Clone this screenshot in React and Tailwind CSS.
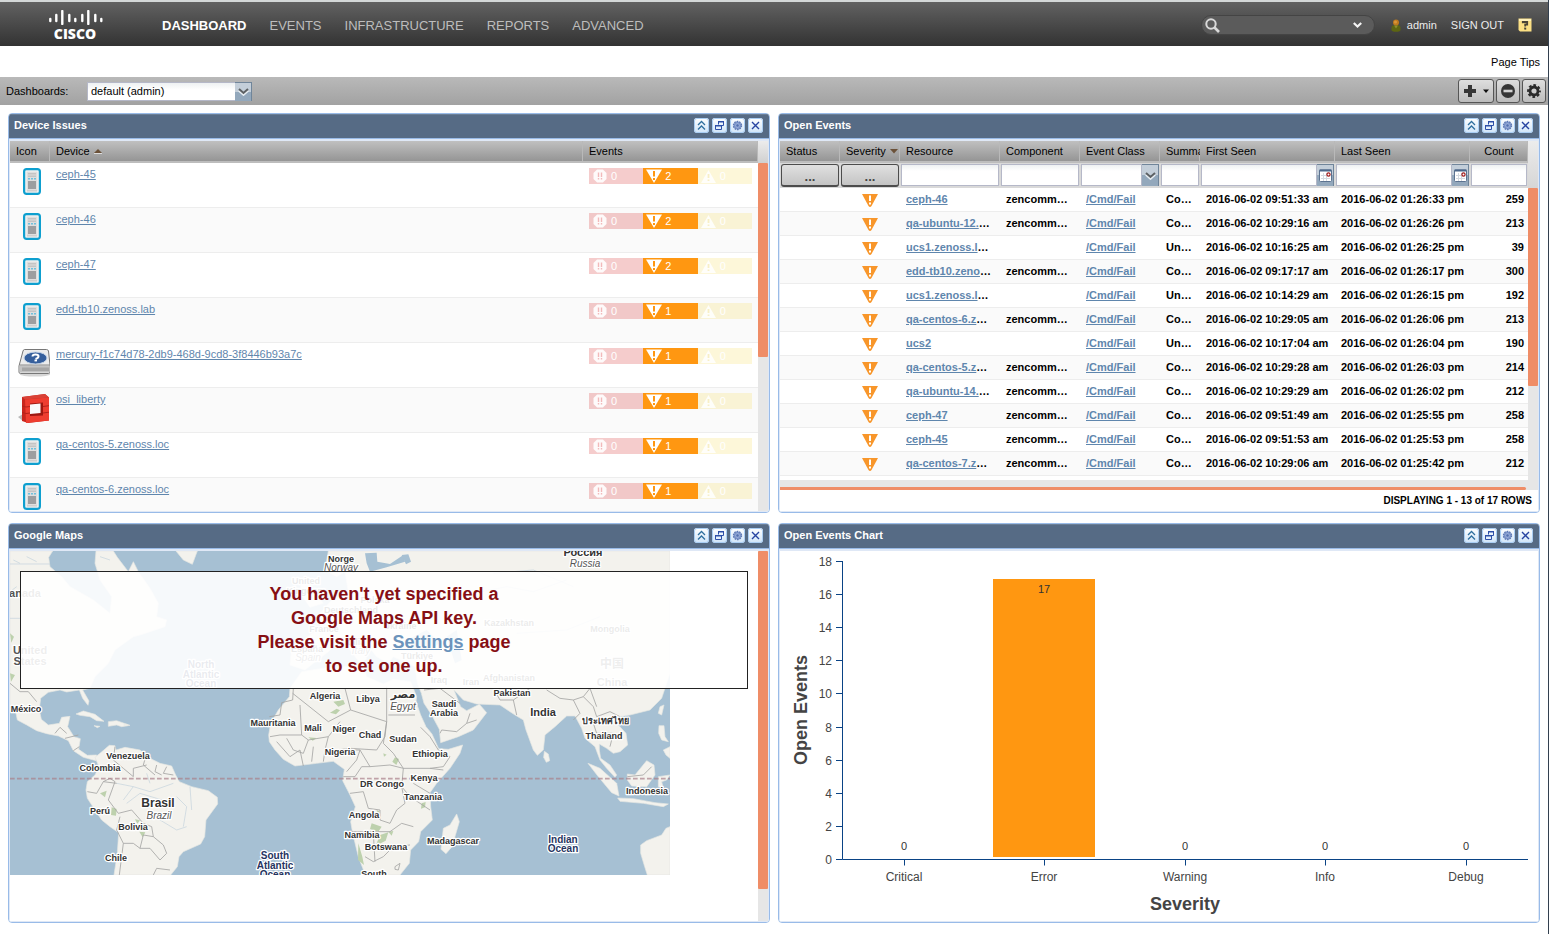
import React from "react";

const TOOL_ICONS = {
  collapse: (
    <g fill="none" stroke="#2f6f9f" strokeWidth="1.3">
      <path d="M4 7l3.500-3.500L11 7" />
      <path d="M4 11.500L7.500 8l3.500 3.500" />
    </g>
  ),
  restore: (
    <g fill="none" stroke="#2d4fa8" strokeWidth="1">
      <path d="M6.500 6.500v-3h5v4h-2" />
      <path d="M6 3.800h6" strokeWidth="1.600" />
      <path d="M3.500 7.500h6v4h-6z" fill="#e4f0fc" />
      <path d="M3 7.800h7" strokeWidth="1.600" />
    </g>
  ),
  gear: (
    <g>
      <circle cx="7.500" cy="7.500" r="4" fill="#93a9d6" stroke="#5d78b4" strokeWidth="1.400" strokeDasharray="1.600 .9" />
      <circle cx="7.500" cy="7.500" r="3" fill="none" stroke="#6d87c0" strokeWidth=".8" />
      <circle cx="7.500" cy="7.500" r="1.200" fill="#536fae" />
    </g>
  ),
  close: <path d="M4 4l7 7M11 4l-7 7" stroke="#2743a0" strokeWidth="1.400" fill="none" />,
};

function Tool({ name, label }) {
  return (
    <button
      type="button"
      aria-label={label}
      className="h-[15px] w-[15px] rounded-[3px] bg-linear-to-b from-white to-[#cfe4f8]"
    >
      <svg viewBox="0 0 15 15" className="block h-[15px] w-[15px]">
        <rect x=".5" y=".5" width="14" height="14" rx="2.500" fill="none" stroke="#a9cdf3" />
        {TOOL_ICONS[name]}
      </svg>
    </button>
  );
}

function Portlet({ title, children }) {
  return (
    <section className="flex h-[400px] min-w-0 flex-col overflow-hidden rounded-[4px] border border-[#99bbe8] bg-white">
      <header className="flex h-[25px] shrink-0 items-center justify-between border-b border-[#99bbe8] bg-[#566b85] pr-1.5 pb-0.5 pl-[5px] shadow-[inset_0_1px_0_#6b7f97]">
        <h2 className="text-[11px] font-bold text-white">{title}</h2>
        <div className="flex gap-[3px]">
          <Tool name="collapse" label={"Collapse " + title} />
          <Tool name="restore" label={"Maximize " + title} />
          <Tool name="gear" label={"Configure " + title} />
          <Tool name="close" label={"Close " + title} />
        </div>
      </header>
      <div className="flex min-h-0 flex-1 flex-col border-x border-t-2 border-b border-[#dfe8f6]">{children}</div>
    </section>
  );
}

function Chevron() {
  return (
    <span className="pointer-events-none flex h-full w-[17px] shrink-0 items-center justify-center border-t border-r border-[#70859a] bg-linear-to-b from-[#c3ced9] from-50% to-[#93a8bc] to-50%">
      <svg viewBox="0 0 11 8" className="h-2 w-[11px]">
        <path d="M1 1.500l4.500 4L10 1.500" stroke="#e8eef3" strokeWidth="2.500" fill="none" transform="translate(0 1)" />
        <path d="M1 1l4.500 4L10 1" stroke="#5d6164" strokeWidth="2" fill="none" />
      </svg>
    </span>
  );
}

function Calendar() {
  return (
    <span className="flex h-full w-[17px] shrink-0 items-center justify-center border-t border-r border-[#70859a] bg-linear-to-b from-[#c3ced9] from-50% to-[#93a8bc] to-50%">
      <svg viewBox="0 0 13 13" className="h-[13px] w-[13px]">
        <rect x=".5" y="1" width="12" height="11.500" rx="1" fill="#fff" stroke="#5c7390" />
        <path d="M.5 1.500h12" stroke="#4b678a" strokeWidth="2" />
        <path d="M2 6.500h9M2 9.500h9M4.500 4v8M7.500 4v8" stroke="#d3d9e0" strokeWidth="1" />
        <circle cx="9.500" cy="5.500" r="1.600" fill="#fff" stroke="#a01818" strokeWidth="1.200" />
      </svg>
    </span>
  );
}

/* ---------- top bar ---------- */

const LOGO_BARS = [
  [49, 18, 22], [55, 14, 22], [61, 10, 25], [68, 14, 22], [74, 18, 22],
  [81, 14, 22], [87, 10, 25], [94, 14, 22], [100, 18, 22],
];

function Logo() {
  return (
    <div className="flex w-[54px] flex-col items-center">
      <svg viewBox="48 10 55 15" className="h-[15px] w-[55px]">
        {LOGO_BARS.map(([x, a, b]) => (
          <path key={x} d={`M${x + 1.3} ${a + 1}V${b - 1}`} stroke="#fff" strokeWidth="2.400" strokeLinecap="round" />
        ))}
      </svg>
      <span className="font-['Open_Sans',sans-serif] text-[14px] leading-[18px] font-extrabold text-white">CISCO</span>
    </div>
  );
}

const NAV = ["DASHBOARD", "EVENTS", "INFRASTRUCTURE", "REPORTS", "ADVANCED"];

function TopBar() {
  return (
    <header className="flex h-[46px] items-center border-t-2 border-[#d4d8d8] bg-linear-to-b from-[#626262] to-[#333333] pt-1 pr-4 pl-12">
      <a href="#home" aria-label="Cisco home"><Logo /></a>
      <nav className="ml-[60px] flex gap-[23px] text-[13px]">
        {NAV.map((n, i) => (
          <a key={n} href={"#" + n.toLowerCase()} className={i === 0 ? "font-bold text-white" : "text-[#bdbdbd]"}>
            {n}
          </a>
        ))}
      </nav>
      <div className="ml-auto flex items-center pb-0.5 text-[11px] text-[#ececec]">
        <div className="flex h-5 w-[174px] items-center rounded-full border border-[#444444] bg-[#5b5b5b] pr-3 pl-[3px]">
          <svg viewBox="0 0 15 15" className="h-[15px] w-[15px] shrink-0">
            <circle cx="6" cy="6" r="4.700" fill="none" stroke="#d9d9d9" strokeWidth="2" />
            <path d="M9.500 9.500l4.500 4.500" stroke="#d9d9d9" strokeWidth="2.600" />
          </svg>
          <input aria-label="Search" className="min-w-0 flex-1 bg-transparent px-1 outline-none" />
          <svg viewBox="0 0 9 7" className="h-[7px] w-[9px] shrink-0">
            <path d="M.8 1l3.700 3.500L8.200 1" fill="none" stroke="#f4f4f4" strokeWidth="2.200" />
          </svg>
        </div>
        <a href="#admin" className="ml-4 flex items-center gap-1.5">
          <svg viewBox="0 0 10 13" className="h-[13px] w-2.5">
            <path d="M.5 8.500Q.5 6.300 3 6.300h4q2.500 0 2.500 2.200v2.500Q9.500 12.800 5 12.800T.5 11z" fill="#5d6512" />
            <path d="M3 6.500h4l-2 3z" fill="#8a8f2e" />
            <circle cx="5" cy="3.500" r="3" fill="#c07a1d" />
            <circle cx="4.500" cy="3" r="1.500" fill="#d9963a" />
          </svg>
          admin
        </a>
        <a href="#signout" className="ml-3.5">SIGN OUT</a>
        <a href="#help" aria-label="Help" className="ml-3.5">
          <svg viewBox="0 0 14 14" className="h-3.5 w-3.5">
            <path d="M.5.5h13v13H2L.5 12z" fill="#fbdf83" />
            <path d="M1 1h12v2H1z" fill="#fff0b8" />
            <path d="M4.800 5.200V4h4.400v2.500H7.200v2" fill="none" stroke="#4a4436" strokeWidth="1.800" />
            <path d="M6.200 9.600h2v2h-2z" fill="#4a4436" />
          </svg>
        </a>
      </div>
    </header>
  );
}

function ToolButton({ label, children, wide }) {
  return (
    <button
      type="button"
      aria-label={label}
      className={
        "flex h-6 items-center justify-center gap-1.5 rounded-[3px] border border-[#555555] bg-linear-to-b from-[#dedede] to-[#bcbcbc] " +
        (wide ? "w-9" : "w-6")
      }
    >
      {children}
    </button>
  );
}

function DashboardBar() {
  return (
    <div className="flex h-7 items-center bg-linear-to-b from-[#b9b9b9] to-[#a2a2a2] pr-0.5 pl-1.5">
      <label htmlFor="dashboard" className="w-[81px]">Dashboards:</label>
      <div className="grid h-[19px] w-[165px] grid-cols-[1fr_17px]">
        <select
          id="dashboard"
          className="col-span-2 col-start-1 row-start-1 h-[19px] w-full appearance-none border border-[#b5b8c8] bg-linear-to-b from-[#eef1f2] to-white to-40% px-[3px] text-[11px] text-black"
        >
          <option>default (admin)</option>
        </select>
        <div className="pointer-events-none col-start-2 row-start-1 h-[19px]"><Chevron /></div>
      </div>
      <div className="ml-auto flex gap-0.5">
        <ToolButton label="Add portlet" wide>
          <svg viewBox="0 0 26 14" className="h-3.5 w-[26px]">
            <path d="M7 1v12M1 7h12" stroke="#363636" strokeWidth="4" />
            <path d="M20 5.500h6l-3 3.500z" fill="#111" />
          </svg>
        </ToolButton>
        <ToolButton label="Remove dashboard">
          <svg viewBox="0 0 14 14" className="h-3.5 w-3.5">
            <circle cx="7" cy="7" r="7" fill="#363636" />
            <path d="M2.500 7h9" stroke="#d2d2d2" strokeWidth="2.600" />
          </svg>
        </ToolButton>
        <ToolButton label="Dashboard settings">
          <svg viewBox="0 0 14 14" className="h-3.5 w-3.5">
            <circle cx="7" cy="7" r="4" fill="none" stroke="#2b2b2b" strokeWidth="2.800" />
            <circle cx="7" cy="7" r="5.900" fill="none" stroke="#2b2b2b" strokeWidth="2" strokeDasharray="2.700 1.934" strokeDashoffset="1.350" />
          </svg>
        </ToolButton>
      </div>
    </div>
  );
}

/* ---------- device issues ---------- */

const TH =
  "h-[22px] overflow-hidden border-b-2 border-[#bdbdbd] bg-linear-to-b from-[#c0c0c0] to-[#959595] px-1.5 text-left font-normal whitespace-nowrap shadow-[inset_-1px_0_0_#b9b9b9]";
const LINK = "text-[#5f86ad] underline";

function ServerIcon() {
  return (
    <svg viewBox="0 0 18 27" className="ml-[7px] h-[27px] w-[18px]">
      <rect x="1.200" y="1.200" width="15.600" height="24.600" rx="2.500" fill="#dedede" stroke="#0e9fcf" strokeWidth="2.400" />
      <rect x="3" y="3" width="12" height="21" fill="none" stroke="#f7f7f7" />
      <path d="M5 5h8v4H5z" fill="#c4c4c4" />
      <path d="M5 7h8" stroke="#e4e4e4" strokeWidth=".8" />
      <path d="M5 10.700h8" stroke="#6fc0dc" strokeWidth="1.500" strokeDasharray="2 1" />
      <path d="M5 13h8v8H5z" fill="#9c9ea0" />
      <path d="M4 22h10v1.500H4z" fill="#cfcfcf" />
    </svg>
  );
}

function DriveIcon() {
  return (
    <svg viewBox="0 0 32 29" className="ml-0.5 h-[29px] w-8">
      <ellipse cx="17" cy="26.500" rx="15" ry="2" fill="#d5d5d5" />
      <path d="M6.500 1.500h22q1.500 0 2 1.500l1.500 14v7q0 1.500-1.500 1.500H2.500Q1 25.500 1 24v-6L5 3q.5-1.500 1.500-1.500z" fill="#ececec" stroke="#777" />
      <path d="M1.500 17.500h30v7h-30z" fill="#c2c2c2" />
      <path d="M2 17h30" stroke="#8b8b8b" />
      <path d="M4 19.500h27v3.500H4z" fill="#a6a6a6" />
      <ellipse cx="17.500" cy="10" rx="11.500" ry="6" fill="#365f9c" stroke="#c3d2e6" />
      <path d="M14.500 8.500q0-2 3-2t3 1.800-3 2.700" fill="none" stroke="#fff" strokeWidth="2" />
      <path d="M16.500 12.500h2.500" stroke="#fff" strokeWidth="1.800" />
    </svg>
  );
}

function CubeIcon() {
  return (
    <svg viewBox="0 0 32 31" className="ml-0.5 h-[31px] w-8">
      <path d="M0 24l5-3v7z" fill="#b9b9b9" />
      <path d="M4 4L27 1l4 3.500v23L10 30l-6-2z" fill="#c9261d" />
      <path d="M4 4L27 1l4 3.500L7 6.500z" fill="#d94136" />
      <path d="M7 6.500l24-2v23L8 30z" fill="#ee3d30" />
      <path d="M12 10.500l13-1v13L12 23z" fill="#9d1710" />
      <path d="M12 11.500l10.500-1V20L12 21z" fill="#fafafa" />
      <path d="M4 13l4 1 4-.5M25 13.500l6-.8M4 19.500l4 1 4-.5M25 20l6-.8" stroke="#b3221a" fill="none" />
    </svg>
  );
}

const DEVICES = [
  ["ceph-45", "server", 2],
  ["ceph-46", "server", 2],
  ["ceph-47", "server", 2],
  ["edd-tb10.zenoss.lab", "server", 1],
  ["mercury-f1c74d78-2db9-468d-9cd8-3f8446b93a7c", "drive", 1],
  ["osi_liberty", "cube", 1],
  ["qa-centos-5.zenoss.loc", "server", 1],
  ["qa-centos-6.zenoss.loc", "server", 1],
];

const DEVICE_ICONS = { server: <ServerIcon />, drive: <DriveIcon />, cube: <CubeIcon /> };

function EventBar({ count }) {
  return (
    <div className="grid h-4 w-[163px] grid-cols-3 text-[11px] leading-4 text-white">
      <span className="flex items-center gap-1 bg-[#cc0000]/20 pl-1">
        <svg viewBox="0 0 14 14" className="h-3.5 w-3.5">
          <path d="M4.100.5h5.800L13.500 4.100v5.800L9.900 13.500H4.100L.5 9.900V4.100z" fill="#fff" fillOpacity=".9" />
          <path d="M5.500 3.500v4.500M8.500 3.500v4.500M5.500 9v1.500M8.500 9v1.500" stroke="#f2b9ba" strokeWidth="1.400" />
        </svg>
        0
      </span>
      <span className="flex items-center gap-[3px] bg-[#ff9711] pl-[3px]">
        <svg viewBox="0 0 16 14" className="h-3.5 w-4">
          <path d="M0 .5h16L8 14z" fill="#fff" />
          <path d="M8 2v5.500M8 9v2" stroke="#ff9711" strokeWidth="2" />
        </svg>
        {count}
      </span>
      <span className="flex items-center gap-1 bg-[#f7d540]/20 pl-[3px]">
        <svg viewBox="0 0 15 13" className="h-[13px] w-[15px]">
          <path d="M7.500 0L15 13H0z" fill="#fff" fillOpacity=".85" />
          <path d="M7.500 4v4M7.500 9.500v1.500" stroke="#f8efc6" strokeWidth="1.800" />
        </svg>
        0
      </span>
    </div>
  );
}

function DeviceIssues() {
  return (
    <div className="flex min-h-0 flex-1">
      <div className="min-w-0 flex-1 overflow-hidden">
        <table className="w-full table-fixed border-separate border-spacing-0">
          <thead>
            <tr>
              <th className={TH + " w-10"}>Icon</th>
              <th className={TH}>
                Device
                <svg viewBox="0 0 8 5" className="mb-0.5 ml-1 inline h-[5px] w-2">
                  <path d="M0 4l4-4 4 4z" fill="#6b5138" />
                  <path d="M0 4.500h8" stroke="#ddd" />
                </svg>
              </th>
              <th className={TH + " w-[175px]"}>Events</th>
            </tr>
          </thead>
          <tbody>
            {DEVICES.map(([name, icon, count]) => (
              <tr key={name} className="even:bg-[#fafafa]">
                <td className="h-[45px] border-b border-[#ededed] py-[5px] pl-1.5 align-top">{DEVICE_ICONS[icon]}</td>
                <td className="border-b border-[#ededed] px-1.5 py-[5px] align-top leading-[13px]">
                  <a href={"#" + name} className={LINK}>{name}</a>
                </td>
                <td className="border-b border-[#ededed] px-1.5 py-[5px] align-top">
                  <EventBar count={count} />
                </td>
              </tr>
            ))}
          </tbody>
        </table>
      </div>
      <div className="flex w-2.5 flex-col bg-[#e6e6e6]">
        <div className="h-[22px] bg-linear-to-b from-[#ececec] to-[#d0d0d0]" />
        <div className="h-[194px] rounded-[1px] bg-[#ef8d67]" />
      </div>
    </div>
  );
}

/* ---------- open events ---------- */

const EVENTS = [
  ["ceph-46", 0, "zencomm…", "Co…", "09:51:33", "01:26:33", 259],
  ["qa-ubuntu-12.", 1, "zencomm…", "Co…", "10:29:16", "01:26:26", 213],
  ["ucs1.zenoss.l", 1, "", "Un…", "10:16:25", "01:26:25", 39],
  ["edd-tb10.zeno", 1, "zencomm…", "Co…", "09:17:17", "01:26:17", 300],
  ["ucs1.zenoss.l", 1, "", "Un…", "10:14:29", "01:26:15", 192],
  ["qa-centos-6.z", 1, "zencomm…", "Co…", "10:29:05", "01:26:06", 213],
  ["ucs2", 0, "", "Un…", "10:17:04", "01:26:04", 190],
  ["qa-centos-5.z", 1, "zencomm…", "Co…", "10:29:28", "01:26:03", 214],
  ["qa-ubuntu-14.", 1, "zencomm…", "Co…", "10:29:29", "01:26:02", 212],
  ["ceph-47", 0, "zencomm…", "Co…", "09:51:49", "01:25:55", 258],
  ["ceph-45", 0, "zencomm…", "Co…", "09:51:53", "01:25:53", 258],
  ["qa-centos-7.z", 1, "zencomm…", "Co…", "10:29:06", "01:25:42", 212],
];

const FILTER_CELL = "h-[25px] bg-[#d9d9d9] p-px align-top";
const FILTER_BUTTON =
  "block h-[23px] w-full rounded-[3px] border border-b-2 border-[#4c4c4c] bg-linear-to-b from-[#e0e0e0] to-[#c4c4c4] pt-1 text-[13px] leading-4 font-bold text-[#444444]";
const FILTER_INPUT = "block h-[22px] w-full min-w-0 border border-[#b5b8c8] bg-linear-to-b from-[#eef1f2] to-white to-30% px-1";
const CELL_BASE = "border-b border-[#ededed] px-1.5 whitespace-nowrap overflow-hidden";
const CELL = CELL_BASE + " pb-0.5";

function OpenEvents() {
  return (
    <div className="flex min-h-0 flex-1 flex-col">
      <div className="flex min-h-0 flex-1">
        <div className="min-w-0 flex-1 overflow-hidden">
          <table className="w-full table-fixed border-separate border-spacing-0">
            <thead>
              <tr>
                <th className={TH + " w-[60px]"}>Status</th>
                <th className={TH + " w-[60px]"}>
                  Severity
                  <svg viewBox="0 0 8 5" className="mb-0.5 ml-1 inline h-[5px] w-2">
                    <path d="M0 0h8L4 4.500z" fill="#6b5138" />
                  </svg>
                </th>
                <th className={TH}>Resource</th>
                <th className={TH + " w-20"}>Component</th>
                <th className={TH + " w-20"}>Event Class</th>
                <th className={TH + " w-10"}>Summary</th>
                <th className={TH + " w-[135px]"}>First Seen</th>
                <th className={TH + " w-[135px]"}>Last Seen</th>
                <th className={TH + " w-[58px]"}>
                  <span className="block text-center">Count</span>
                </th>
              </tr>
              <tr>
                <td className={FILTER_CELL}><button type="button" aria-label="Filter status" className={FILTER_BUTTON}>...</button></td>
                <td className={FILTER_CELL}><button type="button" aria-label="Filter severity" className={FILTER_BUTTON}>...</button></td>
                <td className={FILTER_CELL}><input aria-label="Filter resource" className={FILTER_INPUT} /></td>
                <td className={FILTER_CELL}><input aria-label="Filter component" className={FILTER_INPUT} /></td>
                <td className={FILTER_CELL}>
                  <div className="flex h-[22px]">
                    <input aria-label="Filter event class" className={FILTER_INPUT} />
                    <Chevron />
                  </div>
                </td>
                <td className={FILTER_CELL}><input aria-label="Filter summary" className={FILTER_INPUT} /></td>
                <td className={FILTER_CELL}>
                  <div className="flex h-[22px]">
                    <input aria-label="Filter first seen" className={FILTER_INPUT} />
                    <Calendar />
                  </div>
                </td>
                <td className={FILTER_CELL}>
                  <div className="flex h-[22px]">
                    <input aria-label="Filter last seen" className={FILTER_INPUT} />
                    <Calendar />
                  </div>
                </td>
                <td className={FILTER_CELL}><input aria-label="Filter count" className={FILTER_INPUT} /></td>
              </tr>
            </thead>
            <tbody className="font-bold">
              {EVENTS.map(([res, cut, comp, summary, first, last, count], i) => (
                <tr key={i} className="even:bg-[#fafafa]">
                  <td className={CELL + " h-6"} />
                  <td className={CELL_BASE + " pt-0.5"}>
                    <svg viewBox="0 0 16 13" className="mx-auto h-[13px] w-4">
                      <path d="M0 0h16L9.500 12q-1.500 2-3 0z" fill="#f8962a" />
                      <path d="M8 1.500v5.500M8 8.500v2" stroke="#fff" strokeWidth="2" />
                    </svg>
                  </td>
                  <td className={CELL}><a href={"#" + res} className={LINK}>{res}</a>{cut ? "…" : ""}</td>
                  <td className={CELL}>{comp}</td>
                  <td className={CELL}><a href="#cmd-fail" className={LINK}>/Cmd/Fail</a></td>
                  <td className={CELL}>{summary}</td>
                  <td className={CELL}>2016-06-02 {first} am</td>
                  <td className={CELL}>2016-06-02 {last} pm</td>
                  <td className="border-b border-[#ededed] pr-1 pb-0.5 text-right">{count}</td>
                </tr>
              ))}
            </tbody>
          </table>
        </div>
        <div className="flex w-2.5 flex-col bg-[#e6e6e6]">
          <div className="h-[47px] bg-linear-to-b from-[#ececec] to-[#d6d6d6]" />
          <div className="h-[198px] rounded-[1px] bg-[#ef8d67]" />
        </div>
      </div>
      <div className="flex h-2.5 shrink-0 items-end bg-[#e6e6e6] pr-3">
        <div className="h-[3px] flex-1 rounded-r-[2px] bg-[#ef8d67]" />
      </div>
      <div className="flex h-[21px] shrink-0 items-center justify-end pr-1.5 text-[10px] font-bold">DISPLAYING 1 - 13 of 17 ROWS</div>
    </div>
  );
}

/* ---------- map ---------- */

const LAND = [
  "M30 93H158L146 112 150 140 185 170 210 200 280 240 330 280 335 230 300 180 285 130 288 93H340L352 112 385 155 400 125 415 155 450 205 475 250 470 290 500 300 495 320 420 345 400 350 345 390 325 430 285 470 270 505 248 510 267 543 264 556 248 535 238 510 200 516 180 510 145 517 122 535 118 570 124 598 145 615 178 610 185 592 210 589 203 620 222 650 241 656 236 688 262 706 290 705 288 722 250 712 220 692 205 662 175 648 140 641 110 632 80 615 52 600 48 580 30 556Z",
  "M285 712L300 700 328 676 345 677 348 690 375 682 420 690 450 715 480 730 515 738 527 765 538 785 575 800 625 812 652 832 653 852 618 900 614 950 602 972 550 995 537 1010 532 1040 512 1065H342L352 1000 356 938 330 920 305 900 285 870 262 835 258 810 262 785 285 765 297 740Z",
  "M228 582L250 573 285 583 312 604 290 602 270 590 240 586Z",
  "M325 605L350 602 390 616 365 620 350 615 325 619Z",
  "M282 617l18 2-8 4zM372 613l10 0v4h-10z",
  "M528 93H592L577 133 550 120Z",
  "M870 505L905 455 1000 440 1090 438 1100 470 1150 492 1180 478 1232 485 1240 505 1250 530 1248 545 1262 585 1278 620 1296 642 1316 686 1345 688 1388 675 1380 700 1350 745 1310 790 1290 818 1292 860 1297 900 1262 935 1256 965 1232 990 1228 1030 1200 1065H1096L1075 1010 1058 940 1052 905 1066 860 1050 825 1028 782 1033 748 1000 724 950 730 885 738 850 718 825 690 808 665 806 645 812 610 835 570 868 530Z",
  "M1370 882L1378 905 1356 980 1338 1001 1323 988 1326 960 1330 925 1350 915Z",
  "M985 93L975 150 1010 170 1035 155 1045 215 1000 235 960 280 960 320 905 365 875 380 870 435 915 450 940 430 985 395 1015 365 1050 390 1085 435 1100 415 1055 355 1085 355 1130 410 1165 430 1180 410 1245 440 1252 490 1264 520 1272 550 1295 585 1318 628 1322 668 1375 650 1420 630 1460 578 1438 553 1400 572 1382 560 1362 510 1390 540 1430 552 1500 555 1530 575 1545 585 1570 600 1578 630 1600 690 1612 706 1630 690 1635 645 1665 620 1700 588 1725 588 1745 625 1755 655 1785 680 1800 720 1820 745 1845 772 1850 765 1830 735 1802 715 1798 690 1798 672 1820 685 1840 700 1860 695 1883 675 1878 640 1855 615 1860 590 1890 585 1950 570 1985 535 2000 490 2010 460V93Z",
  "M1633 694l12 8 4 20-10 5-8-15z",
  "M1764 730L1800 745 1850 790 1857 828 1835 818 1795 770Z",
  "M1853 834L1900 836 1965 848 2005 852 1990 860 1930 850 1860 844Z",
  "M1882 762L1905 765 1940 722 1962 735 1965 765 1940 800 1895 798 1882 780Z",
  "M1975 770L2010 765 2000 780 1985 785 1990 805 1975 800Z",
  "M1977 617L1992 617 1995 650 2005 665 1985 660 1976 640Z",
  "M1990 690L2010 680V715L1998 705Z",
  "M1980 560L1992 555 1985 585 1975 580Z",
  "M2010 920L1998 925 1985 945 1940 962 1922 975 1922 1000 1934 1040 1942 1065H2010Z",
  "M900 220L905 180 930 175 930 200 970 250 930 262 915 240Z",
];

const SEAS = [
  "M1095 100L1130 98 1132 125 1170 132 1210 105 1215 125 1160 142 1110 155 1100 130Z",
  "M1205 105l20-2 8 22-15 8z",
  "M1220 360L1280 330 1320 370 1280 390 1230 385Z",
  "M1340 350L1370 330 1385 420 1365 430Z",
];

const BORDERS =
  "M30 490L60 515 85 515 110 545M165 640L180 622 200 640M195 655L235 645M220 692L238 680M345 680L340 720 370 745 400 770 400 745 440 735M440 700L430 735 465 765M470 735L465 755 485 765M500 740L490 760 520 765M262 815L290 820 310 785 350 790M310 785L330 775 345 785 325 840 355 880 395 870 430 910 455 920 460 950 430 945 420 985 400 970 370 970 350 930 360 890M420 985L450 985 480 1020 500 1000 490 975 460 950M370 970L358 1065M460 1065L470 1045 510 1050M880 505L878 540 845 548 840 585 808 590M878 520L985 605 1052 570 1035 505M900 555L905 645 840 645 810 650M905 645L925 660 985 650 1020 605M1052 570L1160 605M1160 500V605L1155 650 1130 690 1050 685 1010 690M985 650L975 690 970 725M860 655L880 690 910 700 925 660M830 665L870 710 900 690 910 738M940 680L935 725M1040 690L1080 690 1070 720 1040 755M1080 690L1110 740 1170 735 1210 745 1290 745 1330 750M1160 605L1150 670 1180 700 1210 745 1205 800 1230 830 1290 870M1262 622L1290 650 1315 690 1350 710 1330 740 1290 745M1030 770L1065 770 1085 740 1110 740M1050 820L1090 815 1105 865 1140 870 1140 900 1170 910 1190 870 1215 850 1205 800M1290 820L1240 790M1055 935L1170 935 1205 910 1240 920M1095 1010L1120 1025 1150 1010 1180 980 1230 975M1120 940L1125 1025M1185 1040L1200 1030 1195 1050 1185 1048ZM1272 510L1320 505 1380 550M1320 640L1325 630 1370 635 1400 610 1430 600M1400 610L1410 580M1480 505L1500 540 1540 540 1550 585M1540 540L1590 505M1640 510L1680 535 1720 540 1750 530 1780 560 1790 590M1720 540L1740 580 1720 600M1750 530L1770 505 1790 560M1790 590L1830 575 1860 590M1780 610L1790 640 1840 640 1830 680M1882 770L1930 765 1955 740M1165 585H1245";

const RIVERS =
  "M350 790L400 800 450 815 520 790M380 850L420 820 470 835 520 850M450 790L440 760M530 830L560 860 550 920M570 800L575 870M480 900L530 930 560 920M400 800L370 840M40 120L60 130M80 110L110 125M300 110L330 120M50 200L30 215M1420 220L1520 200 1600 215 1700 180M1550 340L1700 330 1800 290M1480 160L1600 150 1720 200M60 295H30M30 132H150";

const GREENS =
  "M1000 545l30-5 5 12-20 8zM990 578l20-12 10 5-12 12zM30 340l12 10-8 18zM30 460l15 5-12 20zM335 862l15 5-2 20-15-2zM300 820l20-8-5 20zM418 935l18 2-8 15zM405 898l15 3-8 10zM1115 910l30 10-10 15-25-8zM1140 945l25-8-8 25-30 15zM1075 970l12 40 5 25-18-15zM1185 712l12 5-8 18-12-10zM1265 850l12-4-2 16-12 4zM1165 935l15-2-5 14zM1130 870l8 4-6 12zM1150 700l10 4-8 6zM925 652l25 2-12 8z";

const LABELS = [
  ["anada", 15, 46, 11, "#555"], ["United", 20, 103, 11, "#555"], ["States", 20, 114, 11, "#555"],
  ["México", 16, 161, 9], ["Venezuela", 118, 208, 9], ["Colombia", 90, 220, 9], ["Brasil", 148, 256, 12],
  ["Perú", 90, 263, 9], ["Bolivia", 123, 279, 9], ["Chile", 106, 310, 9],
  ["Norge", 331, 11, 9], ["United", 296, 33, 9], ["Kingdom", 296, 43, 9], ["Deutschland", 341, 62, 9],
  ["France", 314, 81, 9], ["España", 297, 101, 9], ["Polska", 365, 52, 9], ["Ukraine", 390, 78, 9], ["Italia", 345, 94, 9],
  ["Türkiye", 407, 108, 9], ["Iraq", 429, 132, 9], ["Iran", 461, 134, 9], ["Afghanistan", 499, 130, 9],
  ["Kazakhstan", 499, 75, 9], ["Mongolia", 600, 81, 9], ["中国", 602, 117, 12, "#555"], ["China", 602, 135, 11, "#555"],
  ["Россия", 573, 5, 11],
  ["Algeria", 315, 148, 9], ["Libya", 358, 151, 9], ["مصر", 393, 147, 11],
  ["Saudi", 434, 156, 9], ["Arabia", 434, 165, 9], ["Pakistan", 502, 145, 9], ["India", 533, 165, 11],
  ["Mauritania", 263, 175, 9], ["Mali", 303, 180, 9], ["Niger", 334, 181, 9], ["Chad", 360, 187, 9],
  ["Sudan", 393, 191, 9], ["Nigeria", 330, 204, 9], ["Ethiopia", 420, 206, 9], ["Kenya", 414, 230, 9],
  ["DR Congo", 372, 236, 9], ["Tanzania", 413, 249, 9], ["Angola", 354, 267, 9], ["Namibia", 352, 287, 9],
  ["Botswana", 376, 299, 9], ["Madagascar", 443, 293, 9], ["South", 364, 326, 9],
  ["ประเทศไทย", 595, 173, 9], ["Thailand", 594, 188, 9], ["Indonesia", 637, 243, 9],
];

const ITALIC_LABELS = [
  ["Norway", 331, 20], ["Brazil", 149, 268], ["Spain", 298, 110], ["Italy", 351, 103], ["Egypt", 393, 159], ["Russia", 575, 16],
];

const OCEANS = [
  ["North", 191, 117], ["Atlantic", 191, 127], ["Ocean", 191, 136],
  ["South", 265, 308], ["Atlantic", 265, 318], ["Ocean", 265, 327],
  ["Indian", 553, 292], ["Ocean", 553, 301],
];

function WorldMap() {
  return (
    <svg viewBox="0 0 660 324" className="block h-[324px] w-[660px]" role="img" aria-label="World map">
      <rect width="660" height="324" fill="#a6c0d3" />
      <g transform="translate(-10 -31) scale(.333333)">
        {LAND.map((d) => (
          <path key={d} d={d} fill="#f3f2ed" stroke="#e6e7e3" strokeWidth="2" strokeLinejoin="round" />
        ))}
        {SEAS.map((d) => (
          <path key={d} d={d} fill="#a6c0d3" />
        ))}
        <path d={GREENS} fill="#bdd1ad" />
        <path d={RIVERS} fill="none" stroke="#c3d2dc" strokeWidth="2" />
        <path d={BORDERS} fill="none" stroke="#a5a5a3" strokeWidth="2.500" strokeLinejoin="round" />
        <path d="M30 776H2010" stroke="#a9808a" strokeOpacity=".7" strokeWidth="5" strokeDasharray="14 7" />
      </g>
      <g textAnchor="middle" stroke="#fff" strokeWidth="2.500" strokeLinejoin="round" paintOrder="stroke" className="font-['Liberation_Sans','DejaVu_Sans','Noto_Sans','Noto_Sans_CJK_SC',sans-serif]">
        {LABELS.map(([t, x, y, size, color]) => (
          <text key={t + x + y} x={x} y={y} fontSize={size} fontWeight="bold" fill={color || "#333"}>{t}</text>
        ))}
        {ITALIC_LABELS.map(([t, x, y]) => (
          <text key={t} x={x} y={y} fontSize="10" fontStyle="italic" fill="#555">{t}</text>
        ))}
        {OCEANS.map(([t, x, y]) => (
          <text key={t + x + y} x={x} y={y} fontSize="10" fontWeight="bold" fill="#26345f">{t}</text>
        ))}
      </g>
    </svg>
  );
}

function GoogleMaps() {
  return (
    <div className="flex min-h-0 flex-1">
      <div className="relative min-w-0 flex-1 overflow-hidden">
        <WorldMap />
        <div className="absolute top-5 right-2.5 left-2.5 border border-[#222222] bg-white/90 py-2.5 text-center text-[18px] leading-6 font-bold text-[#860f14]">
          <p>
            You haven't yet specified a<br />
            Google Maps API key.<br />
            Please visit the <a href="#settings" className="text-[#6c93bb] underline">Settings</a> page<br />
            to set one up.
          </p>
        </div>
      </div>
      <div className="w-2.5 bg-[#e6e6e6]">
        <div className="h-[338px] rounded-[1px] bg-[#ef8d67]" />
      </div>
    </div>
  );
}

/* ---------- chart ---------- */

const SEVERITIES = [["Critical", 0], ["Error", 17], ["Warning", 0], ["Info", 0], ["Debug", 0]];
const Y_TICKS = [0, 2, 4, 6, 8, 10, 12, 14, 16, 18];

function EventsChart() {
  const base = 308.5;
  const yOf = (v) => Math.round(base - (v * 298) / 18 - 0.5) + 0.5;
  return (
    <svg viewBox="0 0 758 370" className="block min-h-0 w-full flex-1 font-['Liberation_Sans',Arial,sans-serif]" role="img" aria-label="Open events by severity">
      <path d="M62.500 10V308.500H748" fill="none" stroke="#0a4385" />
      {Y_TICKS.map((v) => (
        <g key={v}>
          <path d={`M56 ${yOf(v)}H62.500`} stroke="#0a4385" />
          <text x="52" y={yOf(v) + 4} textAnchor="end" fontSize="12" fill="#444">{v}</text>
        </g>
      ))}
      {SEVERITIES.map(([name, v], i) => {
        const x = 124 + Math.floor(i * 140.6);
        return (
          <g key={name} textAnchor="middle" fill="#444">
            <path d={`M${x + 0.5} 308.500v6`} stroke="#0a4385" />
            {v > 0 && <rect x={x - 51} y="28" width="102" height="278" fill="#ff9711" />}
            <text x={x} y={v > 0 ? 42 : 299} fontSize="11" fill="#333">{v}</text>
            <text x={x} y="330" fontSize="12">{name}</text>
          </g>
        );
      })}
      <text x="405" y="359" textAnchor="middle" fontSize="18" fontWeight="bold" fill="#444">Severity</text>
      <text x="0" y="0" transform="translate(27 159) rotate(-90)" textAnchor="middle" fontSize="18" fontWeight="bold" fill="#444">Open Events</text>
    </svg>
  );
}

export default function App() {
  return (
    <div className="min-h-screen border-r border-[#33404f] bg-white font-['Liberation_Sans',Arial,sans-serif] text-[11px] leading-[14px] text-black">
      <TopBar />
      <div className="flex h-[31px] items-center justify-end pr-2">
        <a href="#tips">Page Tips</a>
      </div>
      <DashboardBar />
      <main className="grid grid-cols-2 gap-x-2 gap-y-2.5 px-2 pt-2 pb-2.5">
        <Portlet title="Device Issues"><DeviceIssues /></Portlet>
        <Portlet title="Open Events"><OpenEvents /></Portlet>
        <Portlet title="Google Maps"><GoogleMaps /></Portlet>
        <Portlet title="Open Events Chart"><EventsChart /></Portlet>
      </main>
    </div>
  );
}
